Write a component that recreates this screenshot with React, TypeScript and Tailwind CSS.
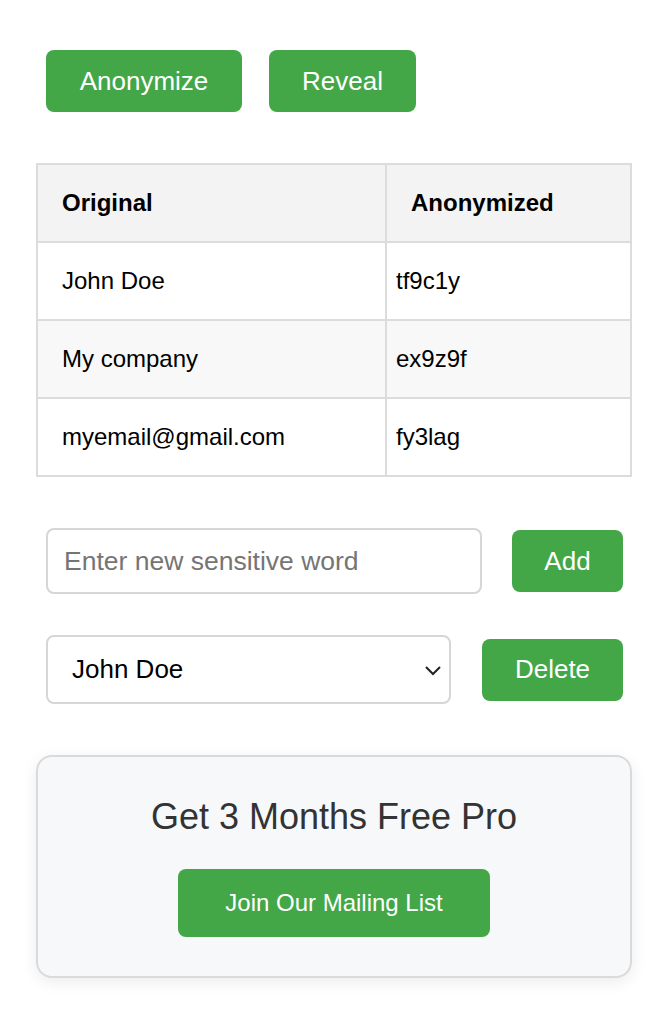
import { useState } from 'react'

const rows = [
  { original: 'John Doe', anonymized: 'tf9c1y' },
  { original: 'My company', anonymized: 'ex9z9f' },
  { original: 'myemail@gmail.com', anonymized: 'fy3lag' },
]

export default function App() {
  const [word, setWord] = useState('')
  const [selected, setSelected] = useState('John Doe')

  return (
    <div className="min-h-screen bg-white px-[36px] pt-[50px] font-['Liberation_Sans',Arial,sans-serif] text-black w-[668px]">
      <div className="flex gap-[27px] pl-[10px]">
        <button className="h-[62px] w-[196px] rounded-[8px] bg-[#43a748] text-[26px] text-white">
          Anonymize
        </button>
        <button className="h-[62px] w-[147px] rounded-[8px] bg-[#43a748] text-[26px] text-white">
          Reveal
        </button>
      </div>

      <table className="mt-[51px] w-[596px] border-collapse text-[24px]">
        <thead>
          <tr className="h-[78px] bg-[#f3f3f3]">
            <th className="w-[349px] border-2 border-[#dcdcdc] pl-[24px] text-left font-bold">Original</th>
            <th className="border-2 border-[#dcdcdc] pl-[24px] text-left font-bold">Anonymized</th>
          </tr>
        </thead>
        <tbody>
          {rows.map((r, i) => (
            <tr key={r.original} className={i % 2 === 1 ? 'h-[78px] bg-[#f8f8f8]' : 'h-[78px] bg-white'}>
              <td className="border-2 border-[#dcdcdc] pl-[24px]">{r.original}</td>
              <td className="border-2 border-[#dcdcdc] pl-[9px]">{r.anonymized}</td>
            </tr>
          ))}
        </tbody>
      </table>

      <div className="mt-[51px] flex items-center justify-between pl-[10px] pr-[9px]">
        <input
          value={word}
          onChange={(e) => setWord(e.target.value)}
          placeholder="Enter new sensitive word"
          className="h-[66px] w-[436px] rounded-[8px] border-2 border-[#d6d6d6] px-[16px] text-[26.5px] outline-none placeholder:text-[#757575]"
        />
        <button className="h-[62px] w-[111px] rounded-[8px] bg-[#43a748] text-[26px] text-white">Add</button>
      </div>

      <div className="mt-[41px] flex items-center justify-between pl-[10px] pr-[9px]">
        <div className="relative w-[405px]">
          <select
            value={selected}
            onChange={(e) => setSelected(e.target.value)}
            className="h-[69px] w-full appearance-none rounded-[8px] border-2 border-[#d6d6d6] bg-white pl-[24px] text-[26px] text-black outline-none"
          >
            {rows.map((r) => (
              <option key={r.original}>{r.original}</option>
            ))}
          </select>
          <svg
            className="pointer-events-none absolute right-[9px] top-[29px]"
            width="18"
            height="12"
            viewBox="0 0 18 12"
            fill="none"
            stroke="#222"
            strokeWidth="2"
          >
            <path d="M2 3l7 7 7-7" />
          </svg>
        </div>
        <button className="h-[62px] w-[141px] rounded-[8px] bg-[#43a748] text-[26px] text-white">Delete</button>
      </div>

      <div className="mt-[51px] w-[596px] rounded-[16px] border-2 border-[#dadada] bg-[#f7f8fa] pb-[39px] pt-[40px] text-center shadow-[0_4px_16px_rgba(0,0,0,0.08)]">
        <h2 className="text-[36px] leading-[40px] text-[#333]">Get 3 Months Free Pro</h2>
        <button className="mt-[32px] h-[68px] w-[312px] rounded-[8px] bg-[#43a748] text-[24px] text-white">
          Join Our Mailing List
        </button>
      </div>
    </div>
  )
}
